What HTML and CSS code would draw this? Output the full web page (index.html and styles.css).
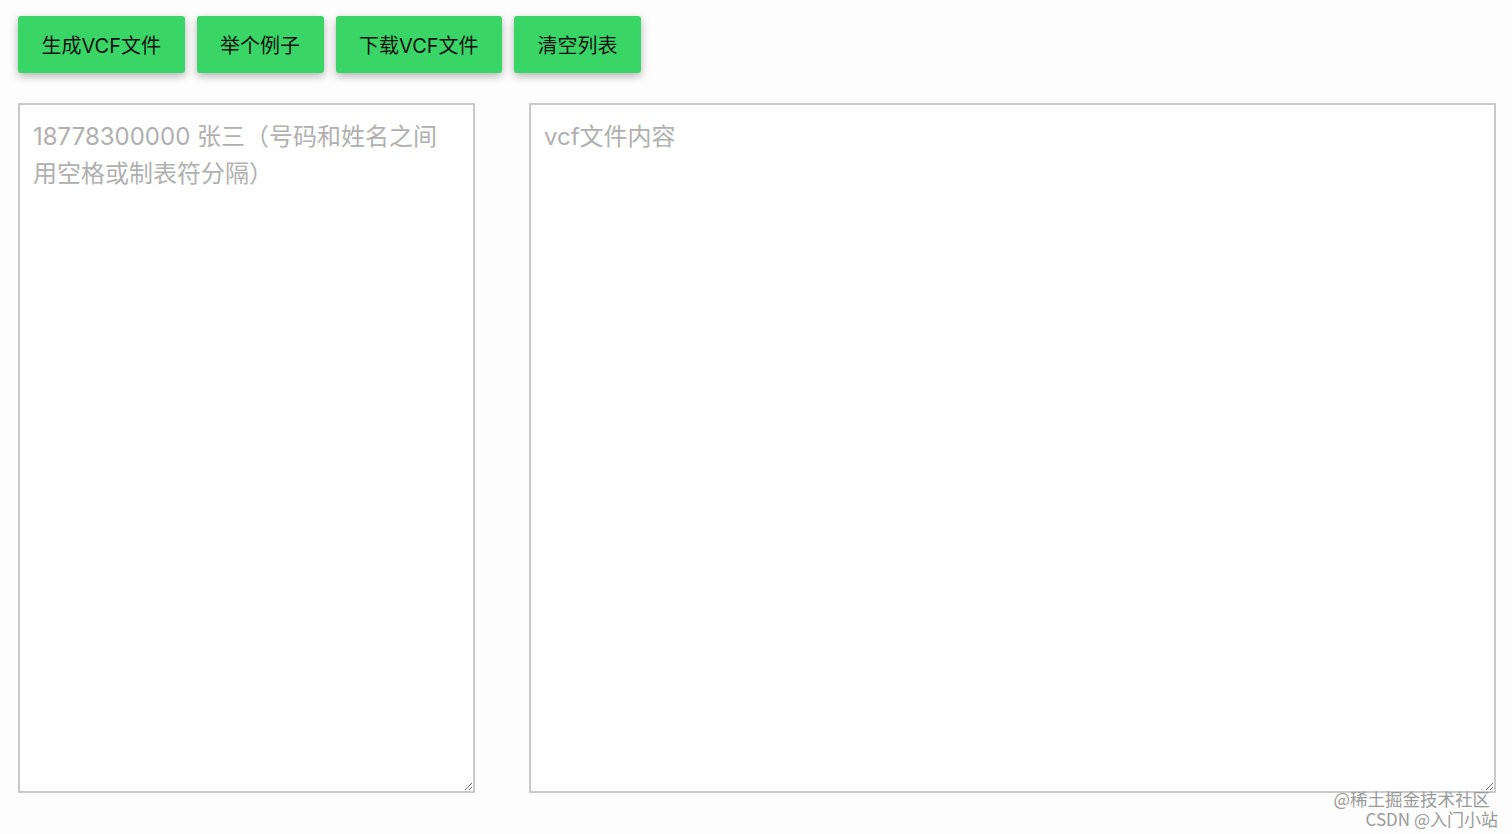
FILE: index.html
```html
<!DOCTYPE html>
<html lang="zh">
<head>
<meta charset="utf-8">
<title>VCF</title>
<link rel="stylesheet" href="styles.css">
</head>
<body>
<div class="page">
  <div class="toolbar">
    <button class="btn">生成VCF文件</button>
    <button class="btn">举个例子</button>
    <button class="btn">下载VCF文件</button>
    <button class="btn">清空列表</button>
  </div>
  <div class="editors">
    <textarea class="box box-input" placeholder="18778300000 张三（号码和姓名之间用空格或制表符分隔）"></textarea>
    <textarea class="box box-output" placeholder="vcf文件内容"></textarea>
  </div>
</div>
<div class="watermark">
  <div class="wm-top">@稀土掘金技术社区</div>
  <div class="wm-bottom">CSDN @入门小站</div>
</div>
</body>
</html>
```

FILE: styles.css
```css
html, body {
  margin: 0;
  padding: 0;
  background: #fdfdfd;
  font-family: Inter, "Noto Sans CJK SC", sans-serif;
}
.page {
  padding: 16px 16px 0 18px;
}
.toolbar {
  display: flex;
  gap: 12px;
}
.btn {
  height: 57px;
  padding: 0 23.5px;
  background: #39d566;
  border: none;
  border-radius: 3px;
  box-shadow: 0 3px 9px rgba(0, 0, 0, 0.3);
  font-family: Inter, "Noto Sans CJK SC", sans-serif;
  font-size: 20px;
  color: #111;
  cursor: pointer;
}
.editors {
  display: flex;
  gap: 54px;
  margin-top: 30px;
}
.box {
  box-sizing: border-box;
  height: 690px;
  margin: 0;
  padding: 13px 24px 14px 13px;
  border: 2px solid #c9c9c9;
  background: #fff;
  font-family: Inter, "Noto Sans CJK SC", sans-serif;
  font-size: 24px;
  line-height: 37px;
  color: #333;
  resize: both;
  outline: none;
}
.box::placeholder {
  color: #b0b0b0;
}
.box-input {
  width: 457px;
}
.box-output {
  width: 967px;
}
.watermark {
  position: absolute;
  right: 14px;
  top: 789px;
  text-align: right;
  font-family: "Noto Sans CJK SC", sans-serif;
  line-height: 20px;
  color: #9a9a9a;
}
.wm-top {
  font-size: 17.5px;
  margin-right: 8px;
}
.wm-bottom {
  font-size: 17px;
}
```
